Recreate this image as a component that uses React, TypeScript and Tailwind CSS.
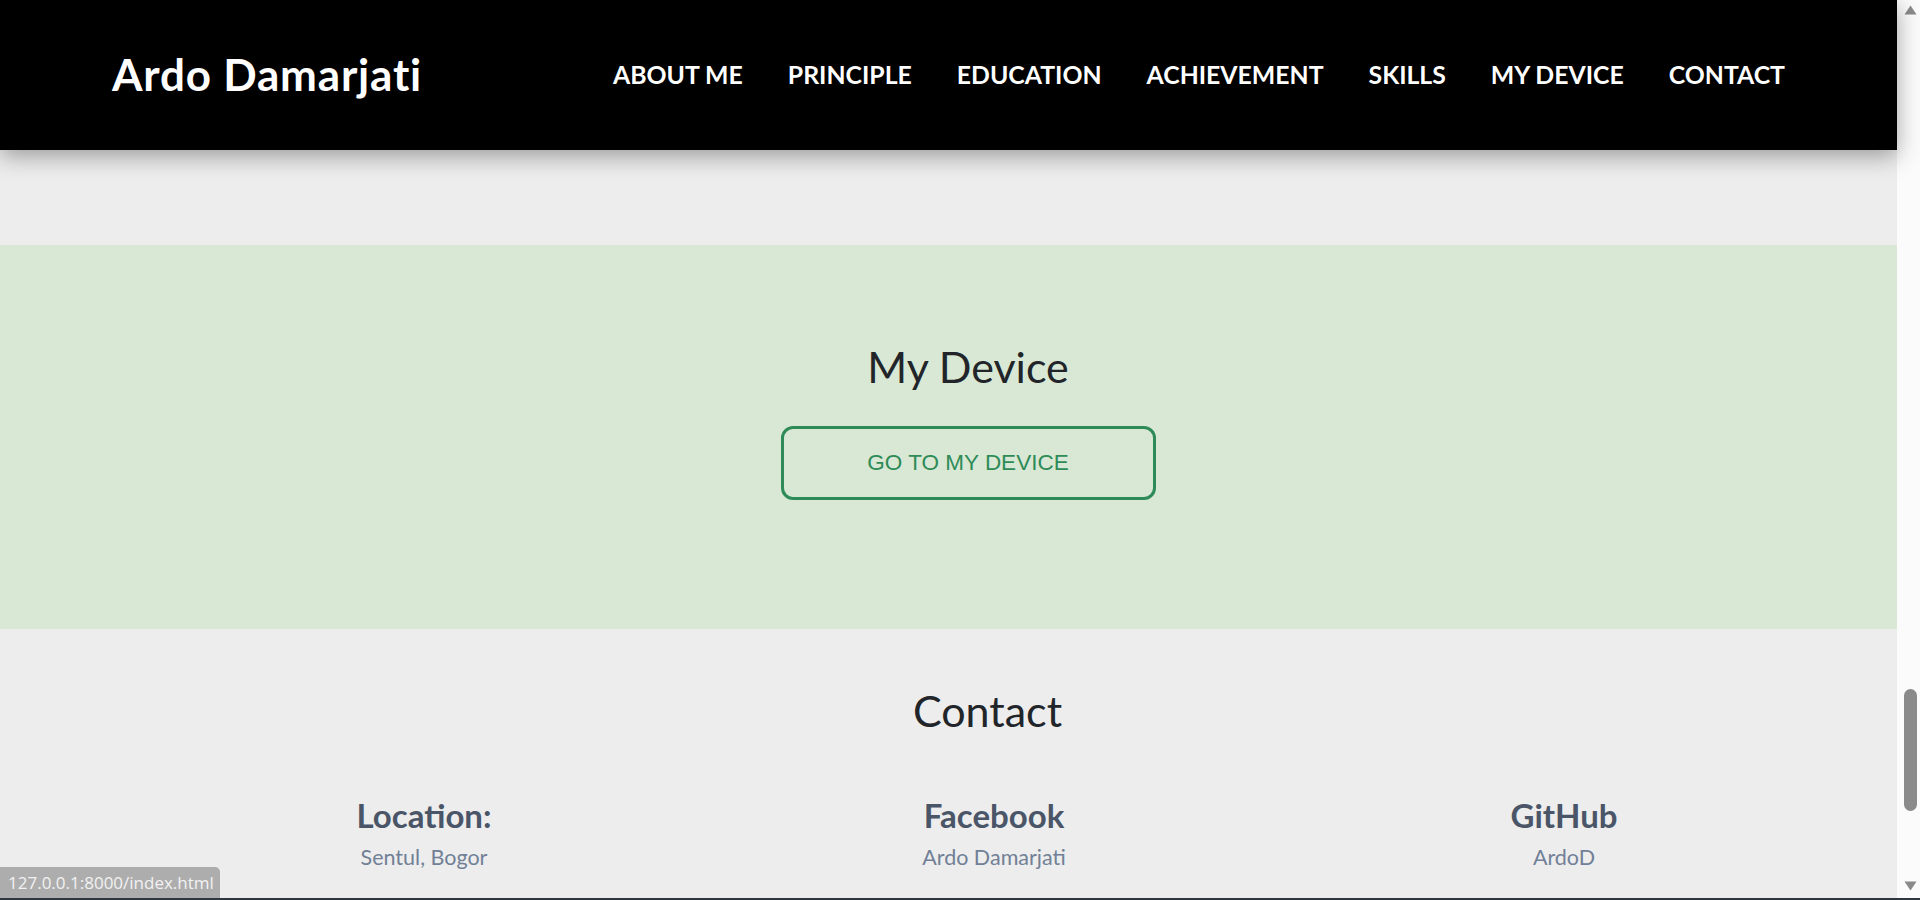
import React from "react";

const navItems = [
  "ABOUT ME",
  "PRINCIPLE",
  "EDUCATION",
  "ACHIEVEMENT",
  "SKILLS",
  "MY DEVICE",
  "CONTACT",
];

const contacts = [
  { title: "Location:", value: "Sentul, Bogor" },
  { title: "Facebook", value: "Ardo Damarjati" },
  { title: "GitHub", value: "ArdoD" },
];

function Scrollbar() {
  return (
    <div className="w-[23px] h-full bg-[#fbfbfb] flex flex-col items-center pl-[3px]">
      <svg width="13" height="10" viewBox="0 0 13 10" className="mt-[5px]">
        <path d="M6.5 0.5 L12.5 9.5 L0.5 9.5 Z" fill="#8a8a8a" />
      </svg>
      <div className="mt-[674px] w-[13px] h-[122px] rounded-full bg-[#8a8a8a]" />
      <svg width="13" height="10" viewBox="0 0 13 10" className="mt-[70px]">
        <path d="M0.5 0.5 L12.5 0.5 L6.5 9.5 Z" fill="#8a8a8a" />
      </svg>
    </div>
  );
}

export default function App() {
  return (
    <div className="relative w-full h-[900px] overflow-hidden flex flex-col bg-[#ededed] font-['Lato',sans-serif]">
      <div className="flex flex-1 min-h-0">
        <div className="flex-1 flex flex-col">
          <header className="relative z-10 h-[150px] bg-black flex items-center justify-between pl-[112px] pr-[112px] shadow-[0_6px_22px_rgba(0,0,0,0.35)]">
            <h1 className="text-white text-[44px] font-bold tracking-[0.8px] mt-[-2px]">
              Ardo Damarjati
            </h1>
            <nav className="flex items-center gap-[45px]">
              {navItems.map((item) => (
                <a key={item} href="#" className="text-white text-[24.8px] font-bold">
                  {item}
                </a>
              ))}
            </nav>
          </header>

          <div className="h-[95px]" />

          <section className="h-[384px] bg-[#d9e8d5] flex flex-col items-center pl-[39px]">
            <h2 className="mt-[94px] text-[43px] leading-[56px] text-[#212529]">My Device</h2>
            <button className="mt-[31px] w-[375px] h-[74px] rounded-[12px] border-[3px] border-[#2e8b57] text-[#2e8b57] text-[22.5px] font-['Liberation_Sans',Arial,sans-serif]">
              GO TO MY DEVICE
            </button>
          </section>

          <section className="flex flex-col">
            <div className="flex justify-center pl-[78px] mt-[54px]">
              <h2 className="text-[43px] leading-[56px] text-[#212529]">Contact</h2>
            </div>
            <div className="grid grid-cols-3 ml-[139px] w-[1710px] mt-[56px]">
              {contacts.map((c) => (
                <div key={c.title} className="flex flex-col items-center">
                  <h3 className="text-[33px] leading-[40px] font-bold text-[#4a5568]">
                    {c.title}
                  </h3>
                  <p className="mt-[8px] text-[21.5px] leading-[28px] text-[#718096]">{c.value}</p>
                </div>
              ))}
            </div>
          </section>
        </div>
        <Scrollbar />
      </div>
      <div className="h-[2px] bg-[#2e3640]" />

      <div className="absolute left-0 bottom-[2px] h-[31px] w-[220px] bg-[#adadad] rounded-tr-[5px] flex items-center pl-[8px] text-[17px] text-[#f2f2f2] font-['Open_Sans',sans-serif]">
        127.0.0.1:8000/index.html
      </div>
    </div>
  );
}
